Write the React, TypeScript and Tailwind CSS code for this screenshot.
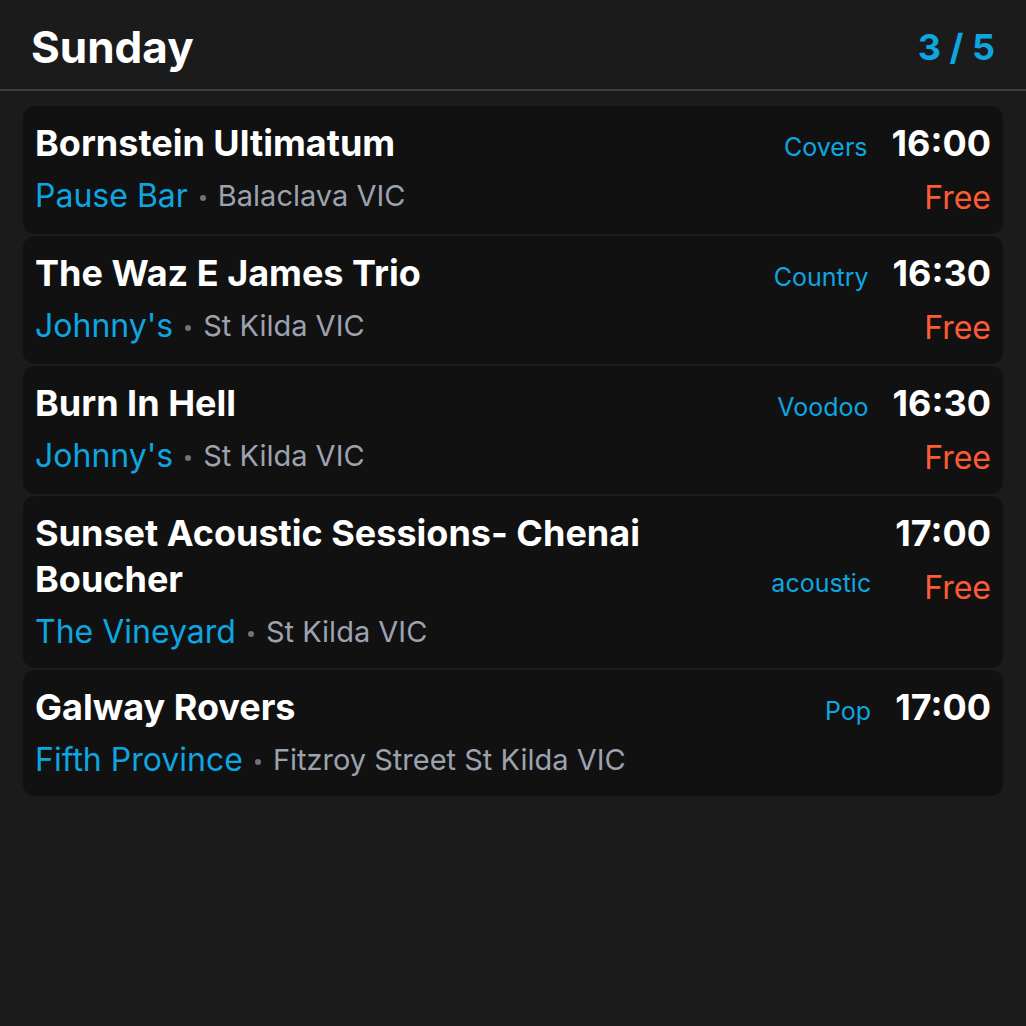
import React from "react";

interface Gig {
  title: string;
  venue: string;
  location: string;
  genre: string;
  time: string;
  free: boolean;
}

const gigs: Gig[] = [
  { title: "Bornstein Ultimatum", venue: "Pause Bar", location: "Balaclava VIC", genre: "Covers", time: "16:00", free: true },
  { title: "The Waz E James Trio", venue: "Johnny's", location: "St Kilda VIC", genre: "Country", time: "16:30", free: true },
  { title: "Burn In Hell", venue: "Johnny's", location: "St Kilda VIC", genre: "Voodoo", time: "16:30", free: true },
  { title: "Sunset Acoustic Sessions- Chenai Boucher", venue: "The Vineyard", location: "St Kilda VIC", genre: "acoustic", time: "17:00", free: true },
  { title: "Galway Rovers", venue: "Fifth Province", location: "Fitzroy Street St Kilda VIC", genre: "Pop", time: "17:00", free: false },
];

const GigCard = ({ title, venue, location, genre, time, free }: Gig) => (
  <div className="rounded-xl bg-[#111111] px-3 pt-[14px] pb-[16px] flex gap-6">
    <div className="flex-1 min-w-0 flex flex-col">
      <div className="flex items-end gap-6">
        <h3 className="flex-1 text-[36px] leading-[46px] font-bold text-white">{title}</h3>
        <span className="text-[25px] leading-[38px] text-[#0ea5e0] whitespace-nowrap">{genre}</span>
      </div>
      <div className="mt-[10px] flex items-center leading-[40px] whitespace-nowrap">
        <span className="text-[32px] text-[#0ea5e0]">{venue}</span>
        <span className="mx-3 mt-1 w-[6px] h-[6px] rounded-full bg-[#6b7280]" />
        <span className="text-[29px] text-[#9ca3af]">{location}</span>
      </div>
    </div>
    <div className="flex flex-col items-end">
      <span className="text-[36px] leading-[46px] font-bold text-white">{time}</span>
      {free && <span className="mt-3 text-[32px] leading-[40px] text-[#ff5a36]">Free</span>}
    </div>
  </div>
);

export default function App() {
  return (
    <div className="min-h-[1026px] w-full bg-[#1b1b1b]" style={{ fontFamily: "Inter, 'Noto Sans', sans-serif" }}>
      <header className="h-[91px] px-[31px] pt-1 flex items-center justify-between border-b-2 border-[#3a3f4b]">
        <h1 className="text-[44px] font-bold text-white">Sunday</h1>
        <span className="text-[36px] font-bold text-[#0ea5e0]">3 / 5</span>
      </header>
      <div className="px-[23px] pt-[15px] flex flex-col gap-[2px]">
        {gigs.map((g, i) => (
          <GigCard key={i} {...g} />
        ))}
      </div>
    </div>
  );
}
